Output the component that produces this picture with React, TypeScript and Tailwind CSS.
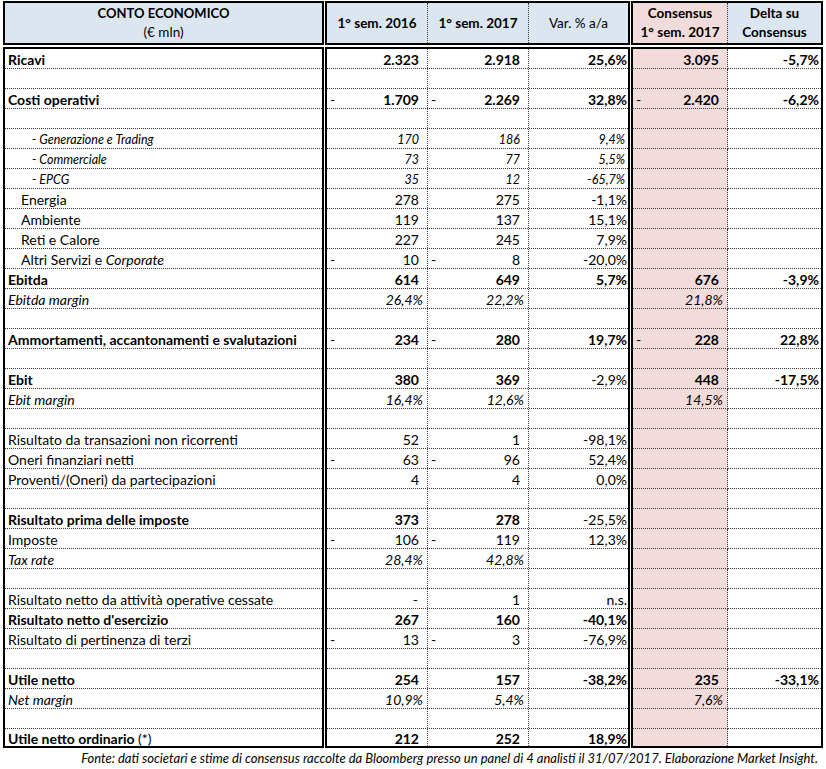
import React from 'react';

type Kind = 'b' | 'n' | 'i' | 'sub' | 'ind' | 'blank';

type Row = {
  label?: React.ReactNode;
  kind: Kind;
  a?: string; // 1° sem. 2016
  b?: string; // 1° sem. 2017
  v?: string; // Var. % a/a
  c?: string; // Consensus
  d?: string; // Delta su consensus
  na?: boolean;
  nb?: boolean;
  nc?: boolean;
  vn?: boolean; // var column not bold
};

const rows: Row[] = [
  { label: 'Ricavi', kind: 'b', a: '2.323', b: '2.918', v: '25,6%', c: '3.095', d: '-5,7%' },
  { kind: 'blank' },
  { label: 'Costi operativi', kind: 'b', a: '1.709', na: true, b: '2.269', nb: true, v: '32,8%', c: '2.420', nc: true, d: '-6,2%' },
  { kind: 'blank' },
  { label: '- Generazione e Trading', kind: 'sub', a: '170', b: '186', v: '9,4%' },
  { label: '- Commerciale', kind: 'sub', a: '73', b: '77', v: '5,5%' },
  { label: '- EPCG', kind: 'sub', a: '35', b: '12', v: '-65,7%' },
  { label: 'Energia', kind: 'ind', a: '278', b: '275', v: '-1,1%' },
  { label: 'Ambiente', kind: 'ind', a: '119', b: '137', v: '15,1%' },
  { label: 'Reti e Calore', kind: 'ind', a: '227', b: '245', v: '7,9%' },
  {
    label: (
      <>
        Altri Servizi e <span className="italic">Corporate</span>
      </>
    ),
    kind: 'ind',
    a: '10',
    na: true,
    b: '8',
    nb: true,
    v: '-20,0%',
  },
  { label: 'Ebitda', kind: 'b', a: '614', b: '649', v: '5,7%', c: '676', d: '-3,9%' },
  { label: 'Ebitda margin', kind: 'i', a: '26,4%', b: '22,2%', c: '21,8%' },
  { kind: 'blank' },
  { label: 'Ammortamenti, accantonamenti e svalutazioni', kind: 'b', a: '234', na: true, b: '280', nb: true, v: '19,7%', c: '228', nc: true, d: '22,8%' },
  { kind: 'blank' },
  { label: 'Ebit', kind: 'b', a: '380', b: '369', v: '-2,9%', vn: true, c: '448', d: '-17,5%' },
  { label: 'Ebit margin', kind: 'i', a: '16,4%', b: '12,6%', c: '14,5%' },
  { kind: 'blank' },
  { label: 'Risultato da transazioni non ricorrenti', kind: 'n', a: '52', b: '1', v: '-98,1%' },
  { label: 'Oneri finanziari netti', kind: 'n', a: '63', na: true, b: '96', nb: true, v: '52,4%' },
  { label: 'Proventi/(Oneri) da partecipazioni', kind: 'n', a: '4', b: '4', v: '0,0%' },
  { kind: 'blank' },
  { label: 'Risultato prima delle imposte', kind: 'b', a: '373', b: '278', v: '-25,5%', vn: true },
  { label: 'Imposte', kind: 'n', a: '106', na: true, b: '119', nb: true, v: '12,3%' },
  { label: 'Tax rate', kind: 'i', a: '28,4%', b: '42,8%' },
  { kind: 'blank' },
  { label: 'Risultato netto da attività operative cessate', kind: 'n', a: '-', b: '1', v: 'n.s.' },
  { label: "Risultato netto d'esercizio", kind: 'b', a: '267', b: '160', v: '-40,1%' },
  { label: 'Risultato di pertinenza di terzi', kind: 'n', a: '13', na: true, b: '3', nb: true, v: '-76,9%' },
  { kind: 'blank' },
  { label: 'Utile netto', kind: 'b', a: '254', b: '157', v: '-38,2%', c: '235', d: '-33,1%' },
  { label: 'Net margin', kind: 'i', a: '10,9%', b: '5,4%', c: '7,6%' },
  { kind: 'blank' },
  {
    label: (
      <>
        Utile netto ordinario <span className="font-normal">(*)</span>
      </>
    ),
    kind: 'b',
    a: '212',
    b: '252',
    v: '18,9%',
  },
];

const dot = 'border-dotted border-[#3a3a3a]';

// font for a row kind
const textCls = (k: Kind) => {
  if (k === 'b') return 'text-[14px] font-bold';
  if (k === 'i') return 'text-[14px] italic';
  if (k === 'sub') return 'text-[12.5px] italic';
  return 'text-[14px]';
};

const labelPad = (k: Kind) => {
  if (k === 'sub') return 'pl-[27px]';
  if (k === 'ind') return 'pl-[16px]';
  return 'pl-[3px]';
};

// last row is cut short by the block's bottom border
const rowCls = (i: number) =>
  i === rows.length - 1 ? 'h-[17px] leading-[19px]' : `h-[20px] leading-[21px] border-b ${dot}`;

function Num({ val, neg, pr, cls }: { val?: string; neg?: boolean; pr: string; cls: string }) {
  return (
    <div className={`flex h-full justify-between ${cls}`}>
      <span className="pl-[3px] font-normal not-italic">{neg ? '-' : ''}</span>
      <span className={pr}>{val}</span>
    </div>
  );
}

const valPad = (val?: string) => (val && val.endsWith('%') ? 'pr-[4px]' : 'pr-[8px]');

export default function App() {
  return (
    <div className="w-[826px] h-[769px] bg-white pt-px pl-[3px] font-[Lato,sans-serif] text-black">
      <div className="flex gap-px">
        {/* Label block */}
        <div className="w-[321px]">
          <div className="h-[44px] border-2 border-black bg-[#dce6f1] flex flex-col items-center justify-center text-[13px] leading-[19px]">
            <div className="font-bold">CONTO ECONOMICO</div>
            <div className="text-[13.5px]">(€ mln)</div>
          </div>
          <div className="mt-[2px] border-2 border-black">
            {rows.map((r, i) => (
              <div key={i} className={`${rowCls(i)} ${textCls(r.kind)} ${labelPad(r.kind)} whitespace-nowrap`}>
                {r.label}
              </div>
            ))}
          </div>
        </div>

        {/* Values block */}
        <div className="w-[305px]">
          <div className="h-[44px] border-2 border-black bg-[#dce6f1] flex text-[13.5px]">
            <div className={`w-[101px] border-r ${dot} flex items-center justify-center font-bold`}>1° sem. 2016</div>
            <div className={`w-[101px] border-r ${dot} flex items-center justify-center font-bold`}>1° sem. 2017</div>
            <div className="flex-1 flex items-center justify-center">Var. % a/a</div>
          </div>
          <div className="mt-[2px] border-2 border-black">
            {rows.map((r, i) => (
              <div key={i} className={`${rowCls(i)} ${textCls(r.kind)} flex`}>
                <div className={`w-[101px] border-r ${dot}`}>
                  <Num val={r.a} neg={r.na} pr={r.a === '-' ? 'pr-[9px]' : valPad(r.a)} cls="" />
                </div>
                <div className={`w-[101px] border-r ${dot}`}>
                  <Num val={r.b} neg={r.nb} pr={valPad(r.b)} cls="" />
                </div>
                <div className="flex-1">
                  <Num
                    val={r.v}
                    pr={r.kind === 'sub' ? 'pr-[3px]' : 'pr-[1px]'}
                    cls={r.vn ? 'font-normal' : ''}
                  />
                </div>
              </div>
            ))}
          </div>
        </div>

        {/* Consensus block */}
        <div className="w-[192px]">
          <div className="h-[44px] border-2 border-black flex text-[13.5px] font-bold leading-[19px]">
            <div className={`w-[95px] border-r ${dot} bg-[#f2dcdb] flex flex-col items-center justify-center`}>
              <div>Consensus</div>
              <div>1° sem. 2017</div>
            </div>
            <div className="flex-1 bg-[#dce6f1] flex flex-col items-center justify-center">
              <div>Delta su</div>
              <div>Consensus</div>
            </div>
          </div>
          <div className="mt-[2px] border-2 border-black flex">
            <div className="w-[95px] bg-[#f2dcdb]">
              {rows.map((r, i) => (
                <div key={i} className={`${rowCls(i)} ${textCls(r.kind)} border-r ${dot}`}>
                  <Num val={r.c} neg={r.nc} pr={valPad(r.c)} cls="" />
                </div>
              ))}
            </div>
            <div className="flex-1">
              {rows.map((r, i) => (
                <div key={i} className={`${rowCls(i)} ${textCls(r.kind)}`}>
                  <Num val={r.d} pr="pr-[2px]" cls="" />
                </div>
              ))}
            </div>
          </div>
        </div>
      </div>

      <div className="mt-[2px] pr-[8px] text-right text-[13px] italic leading-[16px] whitespace-nowrap">
        Fonte: dati societari e stime di consensus raccolte da Bloomberg presso un panel di 4 analisti il 31/07/2017. Elaborazione Market Insight.
      </div>
    </div>
  );
}
